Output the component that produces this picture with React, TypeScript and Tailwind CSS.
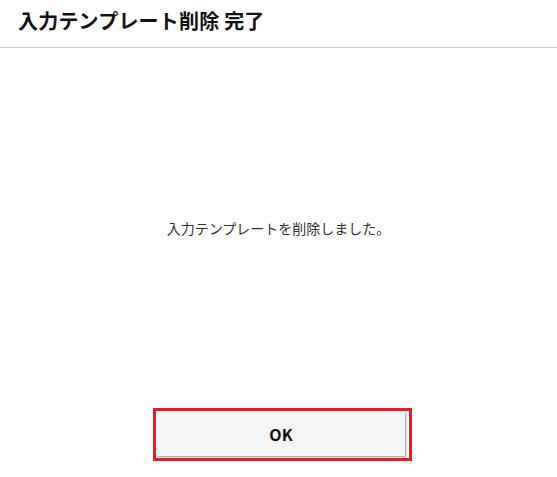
import React from "react";

export default function App() {
  const font = { fontFamily: '"Noto Sans CJK JP", "Noto Sans", sans-serif' };
  return (
    <div className="w-[557px] h-[477px] bg-white flex flex-col" style={font}>
      <div className="h-[48px] border-b border-[#cccccc] flex items-center pl-[18px] pb-[6px]">
        <h1 className="text-[20px] font-bold text-[#111111] leading-none tracking-[0.2px]">
          入力テンプレート削除 完了
        </h1>
      </div>
      <div className="flex-1 flex items-center justify-center">
        <p className="text-[14px] text-[#333333] leading-none">入力テンプレートを削除しました。</p>
      </div>
      <div className="flex justify-center pb-[16px] pl-[8px]">
        <div className="border-[3px] border-[#ec1c24] p-[1px] w-[259px] h-[53px]">
          <button className="w-[248px] h-[44px] bg-[#f5f5f5] shadow-[1px_1px_2px_rgba(0,0,0,0.45)] text-[16px] font-bold text-[#111111]">
            OK
          </button>
        </div>
      </div>
    </div>
  );
}
